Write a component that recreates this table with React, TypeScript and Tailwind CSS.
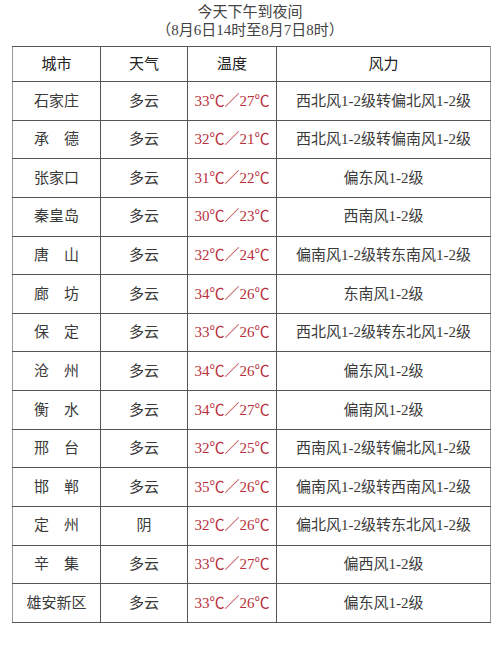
const ROWS = [
  { city: "石家庄", weather: "多云", temp: "33℃／27℃", wind: "西北风1-2级转偏北风1-2级" },
  { city: "承　德", weather: "多云", temp: "32℃／21℃", wind: "西北风1-2级转偏南风1-2级" },
  { city: "张家口", weather: "多云", temp: "31℃／22℃", wind: "偏东风1-2级" },
  { city: "秦皇岛", weather: "多云", temp: "30℃／23℃", wind: "西南风1-2级" },
  { city: "唐　山", weather: "多云", temp: "32℃／24℃", wind: "偏南风1-2级转东南风1-2级" },
  { city: "廊　坊", weather: "多云", temp: "34℃／26℃", wind: "东南风1-2级" },
  { city: "保　定", weather: "多云", temp: "33℃／26℃", wind: "西北风1-2级转东北风1-2级" },
  { city: "沧　州", weather: "多云", temp: "34℃／26℃", wind: "偏东风1-2级" },
  { city: "衡　水", weather: "多云", temp: "34℃／27℃", wind: "偏南风1-2级" },
  { city: "邢　台", weather: "多云", temp: "32℃／25℃", wind: "西南风1-2级转偏北风1-2级" },
  { city: "邯　郸", weather: "多云", temp: "35℃／26℃", wind: "偏南风1-2级转西南风1-2级" },
  { city: "定　州", weather: "阴", temp: "32℃／26℃", wind: "偏北风1-2级转东北风1-2级" },
  { city: "辛　集", weather: "多云", temp: "33℃／27℃", wind: "偏西风1-2级" },
  { city: "雄安新区", weather: "多云", temp: "33℃／26℃", wind: "偏东风1-2级" },
];

export default function App() {
  return (
    <div className="w-[500px] h-[646px] bg-white text-[#3a3a3a] font-['Liberation_Serif','Noto_Sans_CJK_SC',serif] text-[15px]">
      {/* Title */}
      <div className="pt-[3px] text-center leading-[18px] text-[#444]">
        <div>今天下午到夜间</div>
        <div>（8月6日14时至8月7日8时）</div>
      </div>

      {/* Table */}
      <table className="mt-[7px] ml-[12px] w-[478px] table-fixed border-collapse">
        <colgroup>
          <col className="w-[88px]" />
          <col className="w-[87px]" />
          <col className="w-[89px]" />
          <col className="w-[214px]" />
        </colgroup>
        <thead>
          <tr className="h-[35px] text-[#222]">
            <th className="border border-[#555] border-l-[#999] font-normal">城市</th>
            <th className="border border-[#555] font-normal">天气</th>
            <th className="border border-[#555] font-normal">温度</th>
            <th className="border border-[#555] border-r-[#999] font-normal">风力</th>
          </tr>
        </thead>
        <tbody>
          {ROWS.map((r) => (
            <tr key={r.city} className="h-[38.64px]">
              <td className="border border-[#555] border-l-[#999] text-center">{r.city}</td>
              <td className="border border-[#555] text-center">{r.weather}</td>
              <td className="border border-[#555] text-center text-[#b8303c]">{r.temp}</td>
              <td className="border border-[#555] border-r-[#999] text-center">{r.wind}</td>
            </tr>
          ))}
        </tbody>
      </table>
    </div>
  );
}
